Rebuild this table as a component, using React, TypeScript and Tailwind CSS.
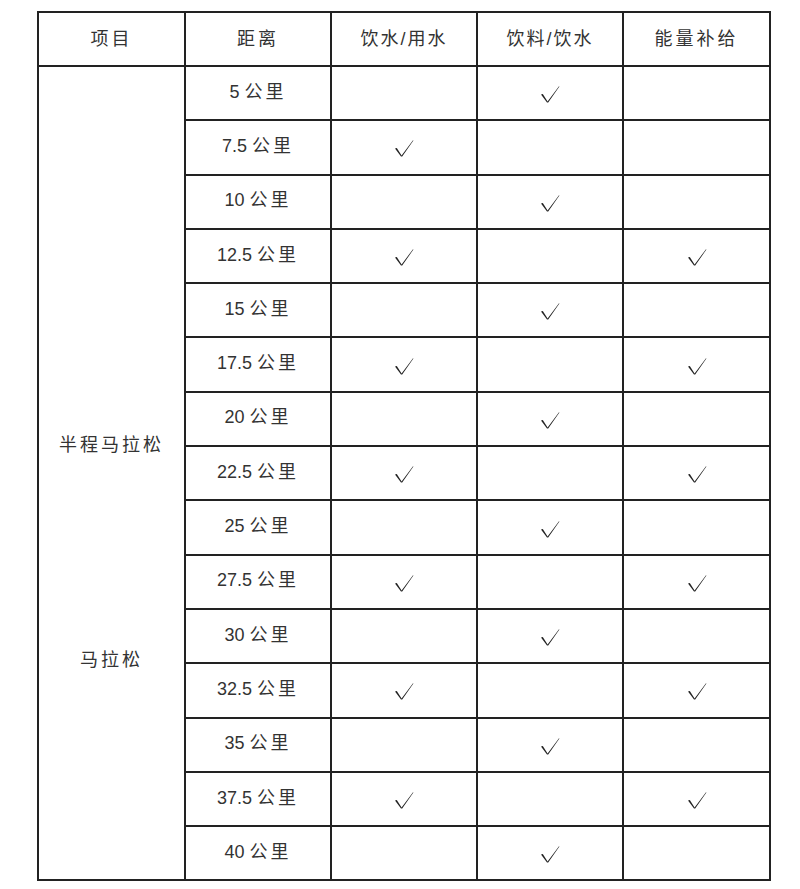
const rows: { dist: string; water: boolean; drink: boolean; energy: boolean }[] = [
  { dist: "5", water: false, drink: true, energy: false },
  { dist: "7.5", water: true, drink: false, energy: false },
  { dist: "10", water: false, drink: true, energy: false },
  { dist: "12.5", water: true, drink: false, energy: true },
  { dist: "15", water: false, drink: true, energy: false },
  { dist: "17.5", water: true, drink: false, energy: true },
  { dist: "20", water: false, drink: true, energy: false },
  { dist: "22.5", water: true, drink: false, energy: true },
  { dist: "25", water: false, drink: true, energy: false },
  { dist: "27.5", water: true, drink: false, energy: true },
  { dist: "30", water: false, drink: true, energy: false },
  { dist: "32.5", water: true, drink: false, energy: true },
  { dist: "35", water: false, drink: true, energy: false },
  { dist: "37.5", water: true, drink: false, energy: true },
  { dist: "40", water: false, drink: true, energy: false },
];

function Check() {
  return (
    <svg width="20" height="18" viewBox="0 0 20 18" className="mx-auto mt-[2px] block">
      <path d="M1 9.5 L2.8 9 L7.6 16.4 L19 1.2 L19.4 1.6 L8.2 17.4 L7 17.4 Z" fill="#222" />
    </svg>
  );
}

const cell = "border-2 border-[#222] text-center align-middle p-0";

export default function App() {
  return (
    <div
      className="min-h-[889px] w-[800px] bg-white pt-[11px] pl-[37px] text-[18px] text-[#333]"
      style={{ fontFamily: '"Liberation Sans", "Noto Sans CJK SC", sans-serif' }}
    >
      <table className="w-[732px] table-fixed border-collapse">
        <colgroup>
          <col className="w-[147px]" />
          <col className="w-[146px]" />
          <col className="w-[146px]" />
          <col className="w-[146px]" />
          <col className="w-[147px]" />
        </colgroup>
        <thead>
          <tr className="h-[54px]">
            <th className={`${cell} font-normal tracking-[3px]`}>项目</th>
            <th className={`${cell} font-normal tracking-[3px]`}>距离</th>
            <th className={`${cell} font-normal tracking-[2px]`}>饮水/用水</th>
            <th className={`${cell} font-normal tracking-[2px]`}>饮料/饮水</th>
            <th className={`${cell} font-normal tracking-[3px]`}>能量补给</th>
          </tr>
        </thead>
        <tbody>
          {rows.map((r, i) => (
            <tr key={r.dist} className="h-[54.3px]">
              {i === 0 ? (
                <td rowSpan={15} className={`${cell} align-top`}>
                  <div className="flex flex-col items-center">
                    <div className="mt-[366px] leading-[24px] tracking-[3px]">半程马拉松</div>
                    <div className="mt-[191px] leading-[24px] tracking-[3px]">马拉松</div>
                  </div>
                </td>
              ) : null}
              <td className={cell}>
                <span className="relative -top-[1px]">
                  {r.dist} <span className="tracking-[3px]">公里</span>
                </span>
              </td>
              <td className={cell}>{r.water ? <Check /> : null}</td>
              <td className={cell}>{r.drink ? <Check /> : null}</td>
              <td className={cell}>{r.energy ? <Check /> : null}</td>
            </tr>
          ))}
        </tbody>
      </table>
    </div>
  );
}
